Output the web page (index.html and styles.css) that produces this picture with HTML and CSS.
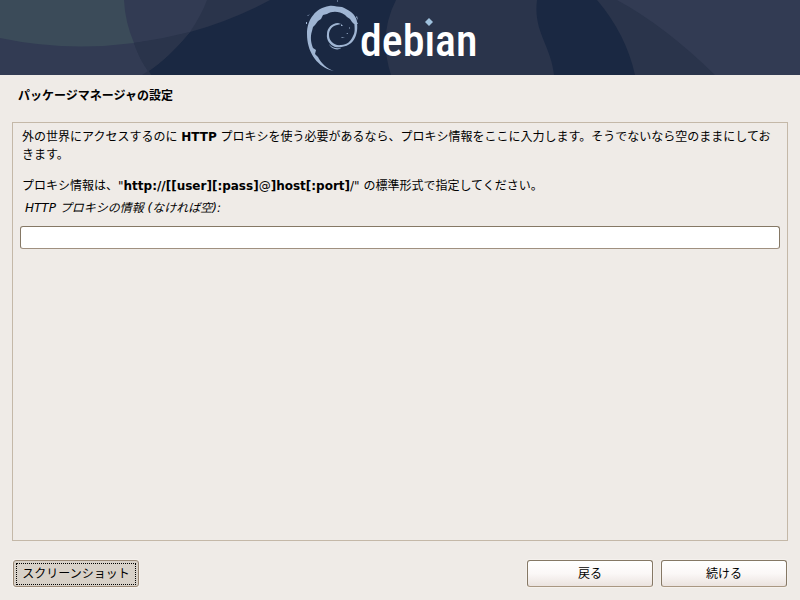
FILE: index.html
```html
<!DOCTYPE html>
<html lang="ja">
<head>
  <meta charset="UTF-8">
  <title>パッケージマネージャの設定</title>
  <link rel="stylesheet" href="styles.css">
</head>
<body>
  <header class="banner">
    <svg class="banner-art" viewBox="0 0 800 75" preserveAspectRatio="xMidYMid slice">
      <rect width="800" height="75" fill="#1a2842"/>
      <path fill="#2a344b" d="M0 0H270Q233 20 190 32Q166 60 149 71L151 75H0Z"/>
      <path fill="#323b53" d="M0 0H207Q202 14 190 32Q162 40 134 43Q139 58 148 71L142 75H0Z"/>
      <path fill="#3b4b59" d="M0 0H124Q125 22 134 43Q66 52 0 38Z"/>
      <path fill="#2a344b" d="M134 43Q162 39 190 32Q169 58 148 71Q139 58 134 43Z"/>
      <path fill="#2a344b" d="M396 0Q378 35 391 75H554C551 45 533 32 537 0Z"/>
      <path fill="#2a344b" d="M597 0Q626 34 635 75H800V0Z"/>
      <path fill="#323b53" d="M617 0Q665 26 715 75H800V0Z"/>
      <!-- swirl -->
      <g fill="#9fb5d3">
        <path d="M334 71L330 70C316 65 307 51 307 34C307 19 316 8 329 6C333 5 338 7 342 7C345 8 348 10 351 12C354 14 357 19 357 22L358 24L354 24L352 22L350 19L347 17L345 15C339 11 332 11 327 14L323 15L321 19L318 21L315 25L313 27L312 31C310 37 311 43 313 48L316 50L315 54L318 57C321 63 327 69 334 71Z"/>
        <path d="M354 21L357 23C358 31 356 37 353 41C349 46 342 48 335 47C330 45 326 40 327 34C327 28 332 23 338 23L341 24L337 25C332 26 329 30 329 35C329 41 334 46 341 45C347 45 351 41 353 36C355 33 355 29 354 21Z"/>
        <path d="M341 24l2 2h-2zM349 28l1-1v2zM346 34l2-1v1zM341 37l4 1h-3zM310 14l-2 2h-1zM306 22h1v2h-1zM337 1l1-1v2zM329 44c3 4 7 5 12 4c-3 3-10 1-12-4zM357 16l1 4l-2-3z"/>
      </g>
      <text class="wordmark" x="360" y="56">debian</text>
      <!-- diamond in place of the dot on the i -->
      <path fill="#2a344b" d="M424 17H435V31H424Z"/>
      <path fill="#9fc1de" d="M429 18L433 22L429 26L425 22Z"/>
    </svg>
  </header>

  <form class="page">
    <h1>パッケージマネージャの設定</h1>

    <main class="panel">
      <p>外の世界にアクセスするのに <b>HTTP</b> プロキシを使う必要があるなら、プロキシ情報をここに入力します。そうでないなら空のままにしておきます。</p>
      <p>プロキシ情報は、"<b>http://[[user][:pass]</b>@<b>]host[:port]</b>/" の標準形式で指定してください。</p>
      <label for="proxy">HTTP プロキシの情報 (なければ空):</label>
      <input id="proxy" type="text">
    </main>

    <div class="actions">
      <button class="screenshot" type="button"><span>スクリーンショット</span></button>
      <button type="button">戻る</button>
      <button type="button">続ける</button>
    </div>
  </form>
</body>
</html>
```

FILE: styles.css
```css
* {
  box-sizing: border-box;
}

body {
  margin: 0;
  min-height: 100vh;
  display: flex;
  flex-direction: column;
  background: #efebe7;
  color: #000;
  font-family: 'DejaVu Sans', 'Noto Sans CJK JP', sans-serif;
  font-size: 12px;
  line-height: 18px;
}

.banner {
  height: 75px;
  background: #1a2842;
}

.banner-art {
  display: block;
  width: 100%;
  height: 100%;
}

.wordmark {
  font-family: 'Roboto Condensed', 'Noto Sans CJK JP', sans-serif;
  font-size: 44px;
  font-weight: 500;
  fill: #fff;
}

.page {
  flex: 1;
  display: flex;
  flex-direction: column;
  padding: 12px 12px 13px;
}

h1 {
  margin: 0 6px 17px;
  font-size: 12px;
}

.panel {
  flex: 1;
  display: flex;
  flex-direction: column;
  border: 1px solid #c4b8a8;
  padding: 5px 7px;
}

.panel p {
  margin: 0 2px 13px;
}

.panel p + p {
  margin-bottom: 4px;
}

label {
  margin: 0 5px 9px;
  font-style: italic;
}

input {
  width: 100%;
  height: 23px;
  padding: 0 6px;
  border: 1px solid #857865;
  border-bottom-color: #a09080;
  border-radius: 3px;
  background: #fff;
  font: inherit;
}

.actions {
  display: flex;
  gap: 8px;
  margin: 19px 1px 0;
}

button {
  width: 126px;
  height: 27px;
  padding: 2px;
  border: 1px solid #857865;
  border-bottom-color: #a99782;
  border-radius: 3px;
  background: linear-gradient(#fff, #fbf8f7 50%, #ebe3df);
  box-shadow: 0 0 0 1px #f5f1ed;
  color: #000;
  font: inherit;
}

.screenshot {
  margin-right: auto;
  background: #d8d1c8;
  border-color: #9a8875;
}

.screenshot span {
  display: block;
  border: 1px dotted #000;
  line-height: 20px;
}
```
